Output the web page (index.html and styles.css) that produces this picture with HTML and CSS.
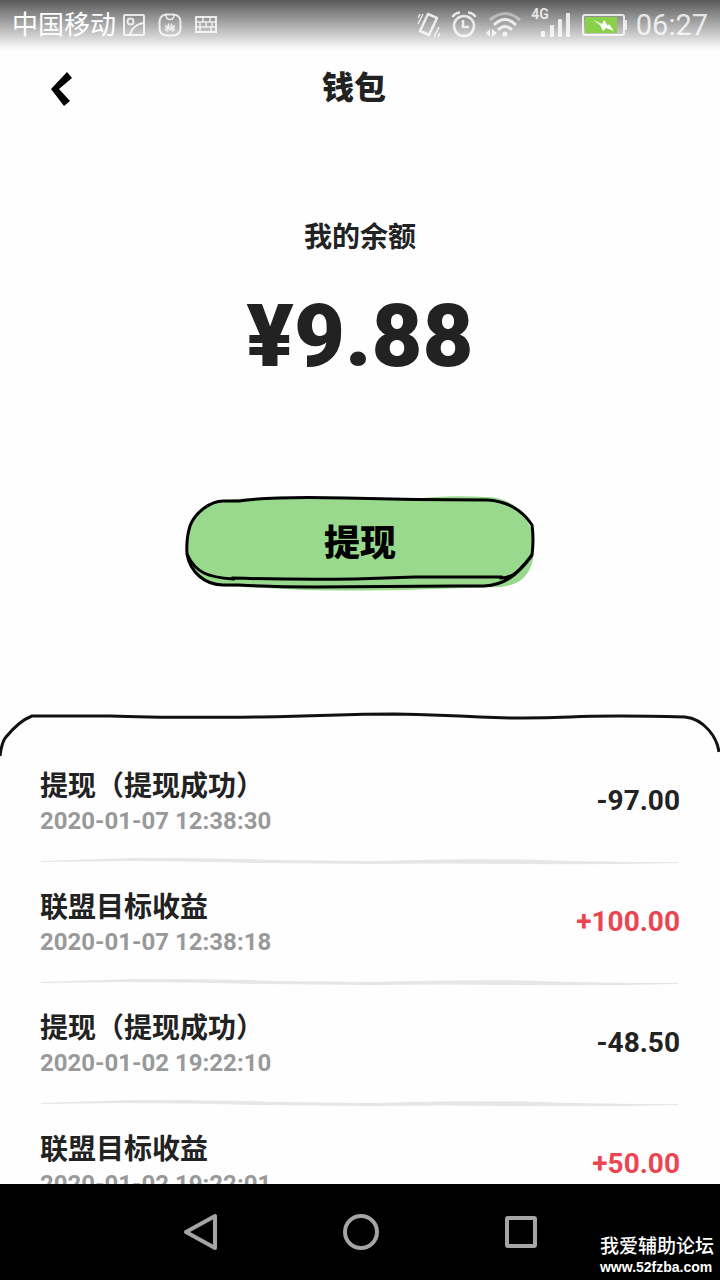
FILE: index.html
```
<!DOCTYPE html>
<html lang="zh-CN">

<head>
    <meta charset="UTF-8">
    <meta name="viewport" content="width=device-width, initial-scale=1.0">
    <title>钱包</title>
    <link rel="stylesheet" href="styles.css">
</head>

<body>
    <div class="status-bar">
        <div class="status-left">
            <span class="carrier">中国移动</span>
            <svg class="picture-icon" width="24" height="24" viewBox="0 0 24 24" fill="none" stroke="currentColor" stroke-width="2">
                <rect x="2" y="2" width="20" height="20" rx="1" />
                <circle cx="8.500" cy="8.500" r="3" />
                <path d="M8 22C9 16 14 11 22 10" />
            </svg>
            <svg width="24" height="24" viewBox="0 0 24 24" fill="none" stroke="currentColor" stroke-width="2">
                <rect x="1.500" y="1.500" width="21" height="21" rx="7" />
                <path d="M8 2c0 6 8 6 8 0" stroke-width="1.500" />
                <g fill="currentColor" stroke="none">
                    <path d="M11.600 18C9 15 8.800 12 10.600 9.800 11.800 12 12 15 11.600 18zM12.400 18C15 15 15.200 12 13.400 9.800 12.200 12 12 15 12.400 18z" />
                    <path d="M11 18C8 16.500 6.700 14.500 7.300 11.500 9.500 13 10.500 15 11 18zM13 18c3-1.500 4.300-3.500 3.700-6.500C14.500 13 13.500 15 13 18z" />
                    <path d="M10.500 18.800C8 18.800 6.800 17.500 6.400 15.500 8.300 16 9.500 17 10.500 18.800zM13.500 18.800c2.500 0 3.700-1.300 4.100-3.300C15.700 16 14.500 17 13.500 18.800z" />
                </g>
            </svg>
            <svg width="24" height="24" viewBox="0 0 24 24" fill="none" stroke="currentColor" stroke-width="2">
                <rect x="2" y="4" width="20" height="15" />
                <path d="M2 9h20M2 14h20M9 4v5M16 4v5M6 9v5M12 9v5M18 9v5M6 14v5M17 14v5" stroke-width="1.500" />
            </svg>
        </div>
        <div class="status-right">
            <svg width="24" height="28" viewBox="0 0 24 28" fill="none" stroke="currentColor">
                <path d="M11 3L20 7 12 24 3 20z" stroke-width="2.500" stroke-linejoin="round" />
                <path d="M1 7l2-4M1 13l5-10M17 26l5-10M21 26l2-4" stroke-width="1.500" />
            </svg>
            <svg class="alarm-icon" width="26" height="28" viewBox="0 0 26 28" fill="none" stroke="currentColor">
                <circle cx="13" cy="15" r="10" stroke-width="2.500" />
                <path d="M12 9v7h6" stroke-width="2.500" />
                <path d="M1.500 6C3 3 5 2 9 1.500M24.500 6C23 3 21 2 17 1.500" stroke-width="2.500" />
            </svg>
            <svg class="wifi-icon" width="38" height="28" viewBox="0 0 38 28" fill="none" stroke="currentColor" stroke-width="3">
                <path d="M5 9Q20-4 35 9" opacity=".5" />
                <path d="M9 14Q20 3 31 14M13 19Q20 12 27 19" />
                <circle cx="20" cy="23" r="2.500" fill="currentColor" stroke="none" />
                <path d="M1 22l4-4v8zM7 18v8l5-4z" fill="currentColor" stroke="none" />
            </svg>
            <span class="network">4G</span>
            <svg class="signal-icon" width="30" height="28" viewBox="0 0 30 28" fill="currentColor">
                <rect y="20" width="4" height="6" rx="1" />
                <rect x="9" y="14" width="4" height="12" rx="1" />
                <rect x="17" y="8" width="4" height="18" rx="1" />
                <rect x="25" y="2" width="4" height="24" rx="1" />
            </svg>
            <svg width="46" height="24" viewBox="0 0 46 24">
                <rect x="1" y="2" width="41" height="20" rx="2" fill="none" stroke="currentColor" stroke-width="2" />
                <rect x="3" y="4" width="32" height="16" fill="#8bd04b" />
                <path d="M43 7h1q1 0 1 1v8q0 1-1 1h-1z" fill="currentColor" />
                <path d="M11 7l9 4 2-4 4 6 1-2 5 7-8-3-3 3-3-6z" fill="#fff" />
            </svg>
            <time class="clock">06:27</time>
        </div>
    </div>

    <main class="wallet">
        <header class="page-header">
            <button class="back-btn" aria-label="返回">
                <svg width="22" height="34" viewBox="0 0 22 34">
                    <path d="M17 0l5 6L9 17l11 12-6 5L1 17z" />
                </svg>
            </button>
            <h1>钱包</h1>
        </header>

        <section class="balance">
            <h2>我的余额</h2>
            <p class="amount">¥9.88</p>
            <button class="withdraw-btn">
                <svg class="withdraw-shape" viewBox="0 0 350 100" fill="none" aria-hidden="true">
                    <path d="M35 7Q60 3 110 4L230 5Q260 1 300 3 325 3 338 20L348 38V65Q343 91 315 93L280 94Q150 99 80 94L33 92Q2 83 3 55 1 17 35 7z" fill="#98d98d" />
                    <path d="M6 28Q11 18 19 11" stroke="#fff" stroke-width="2" />
                    <path d="M54 7H38C26 7 10 18 5 32Q1 45 2 60C5 78 20 91 38 91H54Q90 93 130 93L270 92H299C318 91 331 83 347 61Q349 45 347 31C336 14 320 7 302 6Q230 6 160 4T54 7z" stroke="#000" stroke-width="3" />
                    <path d="M2 60C11 80 24 83 48 85V84Q110 86 170 85L230 83H316V84C328 84 336 76 347 61" stroke="#000" stroke-width="3" />
                </svg>
                <span>提现</span>
            </button>
        </section>

        <section class="records">
            <svg class="records-edge" viewBox="0 0 720 48" preserveAspectRatio="none" fill="none" aria-hidden="true">
                <path d="M0 44Q2 29 6 25 19 9 32 4L110 4Q160 6 260 5C330 4 340 2 395 2Q440 3 480 5T570 5Q610 3 685 5C704 7 717 25 719 40" stroke="#111" stroke-width="3" />
            </svg>
            <ul class="record-list">
                <li class="record">
                    <div class="record-info">
                        <h3>提现（提现成功）</h3>
                        <time>2020-01-07 12:38:30</time>
                    </div>
                    <span class="money">-97.00</span>
                </li>
                <li class="record">
                    <svg class="divider" viewBox="0 0 640 8" preserveAspectRatio="none"><path d="M1 4L95 1Q190 1 240 3L330 4Q440 1 500 3T638 5V6Q560 8 480 7T330 7L220 6Q150 4 80 4L1 5z" /></svg>
                    <div class="record-info">
                        <h3>联盟目标收益</h3>
                        <time>2020-01-07 12:38:18</time>
                    </div>
                    <span class="money income">+100.00</span>
                </li>
                <li class="record">
                    <svg class="divider" viewBox="0 0 640 8" preserveAspectRatio="none"><path d="M1 4L95 1Q190 1 240 3L330 4Q440 1 500 3T638 5V6Q560 8 480 7T330 7L220 6Q150 4 80 4L1 5z" /></svg>
                    <div class="record-info">
                        <h3>提现（提现成功）</h3>
                        <time>2020-01-02 19:22:10</time>
                    </div>
                    <span class="money">-48.50</span>
                </li>
                <li class="record">
                    <svg class="divider" viewBox="0 0 640 8" preserveAspectRatio="none"><path d="M1 4L95 1Q190 1 240 3L330 4Q440 1 500 3T638 5V6Q560 8 480 7T330 7L220 6Q150 4 80 4L1 5z" /></svg>
                    <div class="record-info">
                        <h3>联盟目标收益</h3>
                        <time>2020-01-02 19:22:01</time>
                    </div>
                    <span class="money income">+50.00</span>
                </li>
            </ul>
        </section>
    </main>

    <nav class="nav-bar">
        <button aria-label="返回">
            <svg width="40" height="40" viewBox="0 0 40 40"><path d="M35 4v32L6 20z" /></svg>
        </button>
        <button aria-label="主屏幕">
            <svg width="40" height="40" viewBox="0 0 40 40"><circle cx="21" cy="20" r="16" /></svg>
        </button>
        <button aria-label="最近任务">
            <svg width="40" height="40" viewBox="0 0 40 40"><rect x="7" y="6" width="28" height="28" rx="1" /></svg>
        </button>
        <div class="watermark">
            <span>我爱辅助论坛</span>
            <span class="site">www.52fzba.com</span>
        </div>
    </nav>
</body>

</html>
```
FILE: styles.css
```
* {
    box-sizing: border-box;
}

body {
    display: flex;
    flex-direction: column;
    height: 100vh;
    margin: 0;
    background: #fefefe;
    color: #222;
    font-family: Roboto, "Noto Sans CJK SC", sans-serif;
}

h1,
h2,
h3,
p,
ul {
    margin: 0;
    padding: 0;
}

button {
    padding: 0;
    border: none;
    background: none;
    font-family: inherit;
    cursor: pointer;
}

svg {
    display: block;
    flex-shrink: 0;
}

/* Status bar */
.status-bar {
    display: flex;
    justify-content: space-between;
    flex-shrink: 0;
    height: 50px;
    padding: 0 12px;
    background: linear-gradient(#5a5a5a, #fefefe);
    color: rgba(255, 255, 255, 0.8);
}

.status-left,
.status-right {
    display: flex;
    align-items: center;
}

.status-left {
    gap: 12px;
}

.carrier {
    color: #fff;
    font-size: 26px;
    line-height: 48px;
}

.picture-icon {
    margin-left: -6px;
}

.alarm-icon {
    margin-left: 10px;
}

.wifi-icon {
    margin-left: 8px;
}

.network {
    align-self: flex-start;
    margin-left: 8px;
    padding-top: 6px;
    font-size: 14px;
    font-weight: bold;
    line-height: 16px;
}

.signal-icon {
    margin: 0 11px 0 -8px;
}

.clock {
    margin-left: 8px;
    font-size: 29px;
    line-height: 54px;
}

/* Header */
.wallet {
    display: flex;
    flex-direction: column;
    flex: 1;
    min-height: 0;
    overflow: hidden;
}

.page-header {
    display: grid;
    grid-template-columns: 1fr auto 1fr;
    align-items: center;
    flex-shrink: 0;
    height: 76px;
    padding: 0 60px 0 48px;
}

.page-header h1 {
    font-size: 32px;
    font-weight: 900;
    line-height: 76px;
}

.back-btn {
    justify-self: start;
    padding: 4px 2px 2px;
}

/* Balance */
.balance {
    display: flex;
    flex-direction: column;
    align-items: center;
    flex-shrink: 0;
    padding: 92px 20px 118px;
}

.balance h2 {
    font-size: 28px;
    line-height: 40px;
}

.amount {
    margin: 20px 0 100px;
    font-size: 88px;
    font-weight: 900;
    line-height: 116px;
}

.withdraw-btn {
    position: relative;
    width: 350px;
    height: 100px;
    padding-bottom: 8px;
    color: #000;
    font-size: 36px;
    font-weight: 900;
}

.withdraw-shape {
    position: absolute;
    inset: 0;
}

.withdraw-btn span {
    position: relative;
}

/* Records */
.records {
    position: relative;
    padding: 28px 40px 0;
}

.records-edge {
    position: absolute;
    top: 0;
    left: 0;
    width: 100%;
    height: 48px;
}

.record-list {
    list-style: none;
}

.record {
    position: relative;
    display: flex;
    align-items: center;
    justify-content: space-between;
    height: 121px;
}

.record h3 {
    font-size: 28px;
    line-height: 40px;
}

.record time {
    display: block;
    color: #999;
    font-size: 24px;
    font-weight: bold;
    line-height: 28px;
}

.money {
    font-size: 28px;
    font-weight: bold;
}

.income {
    color: #e94652;
}

.divider {
    position: absolute;
    top: -4px;
    left: 0;
    width: 100%;
    height: 8px;
    fill: #e6e6e6;
}

/* Navigation bar */
.nav-bar {
    position: relative;
    display: flex;
    align-items: center;
    justify-content: center;
    gap: 120px;
    flex-shrink: 0;
    height: 96px;
    background: #000;
}

.nav-bar svg {
    fill: none;
    stroke: #a5a5a5;
    stroke-width: 4;
    stroke-linejoin: round;
}

.watermark {
    position: absolute;
    right: 6px;
    bottom: 5px;
    display: flex;
    flex-direction: column;
    color: #fff;
    font-size: 19px;
    font-weight: 500;
    line-height: 24px;
}

.site {
    font-family: "Liberation Sans", sans-serif;
    font-size: 14px;
    font-weight: bold;
    line-height: 16px;
}
```
